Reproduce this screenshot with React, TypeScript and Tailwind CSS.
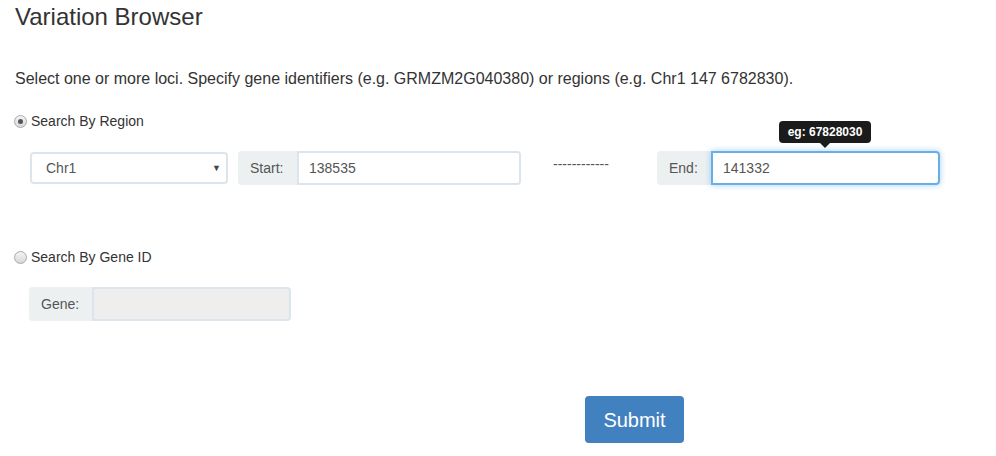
import { useState } from "react"

function Radio({ checked }: { checked: boolean }) {
  return (
    <span className="relative inline-block w-[13px] h-[13px] rounded-full border border-[#a9a9a9] bg-gradient-to-b from-[#f4f4f4] to-[#d8d8d8]">
      {checked && (
        <span className="absolute left-[3px] top-[3px] w-[5px] h-[5px] rounded-full bg-[#555]" />
      )}
    </span>
  )
}

export default function App() {
  const [mode, setMode] = useState("region")
  const [start, setStart] = useState("138535")
  const [end, setEnd] = useState("141332")

  return (
    <div
      className="w-[996px] h-[456px] bg-white text-[#333] overflow-hidden"
      style={{ fontFamily: '"Liberation Sans", Arial, sans-serif' }}
    >
      <h3 className="pt-[4px] pl-[15px] text-[24px] leading-[26.4px]">
        Variation Browser
      </h3>

      <p className="mt-[38px] pl-[15px] text-[16px] leading-[22px]">
        Select one or more loci. Specify gene identifiers (e.g. GRMZM2G040380) or regions (e.g. Chr1 147 6782830).
      </p>

      <label
        className="mt-[21px] pl-[14px] flex items-center gap-[4px] text-[14px] leading-[20px] cursor-pointer"
        onClick={() => setMode("region")}
      >
        <Radio checked={mode === "region"} />
        <span>Search By Region</span>
      </label>

      <div className="mt-[20px] pl-[30px] flex items-center h-[34px]">
        <div className="relative w-[198px] h-[32px] border-2 border-[#dce4ec] rounded-[4px] flex items-center pl-[14px] text-[14px] text-[#555]">
          Chr1
          <span className="absolute right-[5px] top-[8px] text-[9px] text-[#444]">▼</span>
        </div>

        <div className="ml-[10px] flex h-[34px] w-[283px]">
          <div className="w-[59px] bg-[#ecf0f1] rounded-l-[4px] flex items-center pl-[12px] text-[14px] text-[#555]">
            Start:
          </div>
          <input
            value={start}
            onChange={(e) => setStart(e.target.value)}
            className="flex-1 min-w-0 border-2 border-[#dce4ec] rounded-r-[4px] px-[10px] text-[14px] text-[#555] outline-none"
          />
        </div>

        <div className="ml-[32px] w-[59px] text-[14px] text-[#555] leading-[14px] -mt-[8px]">
          ------------
        </div>

        <div className="relative ml-[45px] flex h-[34px] w-[283px]">
          <div className="w-[54px] bg-[#ecf0f1] rounded-l-[4px] flex items-center pl-[12px] text-[14px] text-[#555]">
            End:
          </div>
          <input
            value={end}
            onChange={(e) => setEnd(e.target.value)}
            className="flex-1 min-w-0 border-2 border-[#66afe9] rounded-r-[4px] px-[10px] text-[14px] text-[#555] outline-none shadow-[0_0_6px_rgba(102,175,233,0.6)]"
          />
          <div className="absolute left-[122px] -top-[30px] w-[92px] h-[22px] bg-[#1b1b1b] rounded-[4px] text-white text-[12px] font-bold flex items-center justify-center">
            eg: 67828030
            <span className="absolute left-[41px] -bottom-[5px] w-0 h-0 border-l-[5px] border-r-[5px] border-t-[5px] border-l-transparent border-r-transparent border-t-[#1b1b1b]" />
          </div>
        </div>
      </div>

      <label
        className="mt-[62px] pl-[14px] flex items-center gap-[4px] text-[14px] leading-[20px] cursor-pointer"
        onClick={() => setMode("gene")}
      >
        <Radio checked={mode === "gene"} />
        <span>Search By Gene ID</span>
      </label>

      <div className="mt-[20px] pl-[29px] flex h-[34px]">
        <div className="w-[63px] bg-[#ecf0f1] rounded-l-[4px] flex items-center pl-[12px] text-[14px] text-[#555]">
          Gene:
        </div>
        <input
          disabled
          className="w-[199px] bg-[#eeeeee] border-2 border-[#dce4ec] rounded-r-[4px] outline-none"
        />
      </div>

      <button className="mt-[75px] ml-[585px] w-[99px] h-[47px] bg-[#4281bf] rounded-[4px] text-white text-[20px]">
        Submit
      </button>
    </div>
  )
}
